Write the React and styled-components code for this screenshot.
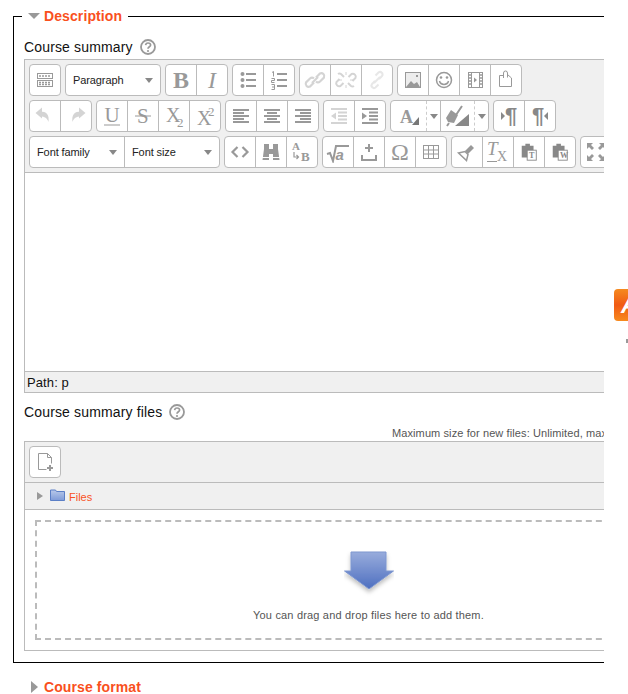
import React from 'react';
import styled, { createGlobalStyle } from 'styled-components';

const Global = createGlobalStyle`
  html, body { margin: 0; padding: 0; background: #fff; }
  body { font-family: "Liberation Sans", Arial, sans-serif; color: #111; }
`;
const Page = styled.div`position: relative; width: 628px; height: 694px; overflow: hidden;`;
const Clip = styled.div`width: 604px; overflow: hidden; padding-top: 6px;`;
const Fieldset = styled.fieldset`
  margin: 0 0 0 13px; padding: 0 10px 11px 10px; width: 689px; box-sizing: content-box;
  border: 1px solid #000; min-inline-size: 0;
`;
const Legend = styled.legend`
  display: flex; align-items: center; gap: 4px; margin-left: -2px; padding: 0 6px; height: 20px;
`;
const Heading = styled.span`font-size: 14px; font-weight: bold; color: #f9501d; line-height: 20px; letter-spacing: 0.1px;`;
const ArrowDown = styled.span`width: 0; height: 0; border-left: 6px solid transparent; border-right: 6px solid transparent; border-top: 6px solid #999;`;
const ArrowRight = styled.span`
  flex: none; width: 0; height: 0; border-left: ${p => p.$w}px solid #999;
  border-top: ${p => p.$s}px solid transparent; border-bottom: ${p => p.$s}px solid transparent;
`;
const Label = styled.div`display: flex; align-items: center; gap: 7px; height: 20px; font-size: 14px; letter-spacing: 0.15px;`;
const SummaryLabel = styled(Label)`margin: 11px 0 2px;`;
const FilesLabel = styled(Label)`margin-top: 9px;`;
const Editor = styled.div`border: 1px solid #bbb; background: #f0f0f0;`;
const Toolbar = styled.div`display: flex; flex-direction: column; gap: 4px; padding: 4px; border-bottom: 1px solid #bbb;`;
const Row = styled.div`display: flex; gap: 4px; height: 32px;`;
const Group = styled.div`display: flex; flex: none; border: 1px solid #bbb; border-radius: 4px; background: #fff; overflow: hidden;`;
const Btn = styled.div`
  flex: none; width: 30px; height: 30px; display: flex; align-items: center; justify-content: center;
  color: ${p => (p.$off ? '#d4d4d4' : '#999')};
  & + & { border-left: 1px solid #bbb; }
  svg { display: block; }
`;
const Letter = styled.span`
  font-family: "Liberation Serif", serif; font-size: 24px; line-height: 1; color: #999;
  font-weight: ${p => (p.$bold ? 'bold' : 'normal')}; font-style: ${p => (p.$italic ? 'italic' : 'normal')};
`;
const Pilcrow = styled.span`font-size: 22px; font-weight: bold; line-height: 1; color: #888;`;
const Pointer = styled.span`
  flex: none; width: 0; height: 0; border-top: 4px solid transparent; border-bottom: 4px solid transparent;
  ${p => (p.$left ? 'border-right: 4px solid #888;' : 'border-left: 4px solid #888;')}
`;
const Split = styled.div`
  flex: none; height: 30px; width: ${p => p.$w}px; display: flex; align-items: center; justify-content: center;
  & + & { border-left: 1px solid #bbb; }
`;
const SplitIcon = styled.div`flex: 1; height: 30px; display: flex; align-items: center; justify-content: center; border-right: 1px dashed #ccc;`;
const SplitArrow = styled.div`flex: none; width: 13px; display: flex; justify-content: center;`;
const Select = styled.div`
  flex: none; width: ${p => p.$w}px; height: 30px; box-sizing: border-box; padding: 0 7px; display: flex; align-items: center; justify-content: space-between;
  font-size: 11px; color: #222; letter-spacing: -0.1px;
  & + & { border-left: 1px solid #bbb; }
`;
const Caret = styled.span`flex: none; width: 0; height: 0; border-left: 4px solid transparent; border-right: 4px solid transparent; border-top: 5px solid #888;`;
const Content = styled.div`height: 198px; background: #fff;`;
const Status = styled.div`height: 20px; line-height: 21px; padding-left: 2px; font-size: 13px; letter-spacing: 0.1px; border-top: 1px solid #bbb;`;
const Limits = styled.div`margin-top: 1px; padding-left: 368px; height: 18px; line-height: 20px; font-size: 11px; letter-spacing: 0.1px; color: #555; white-space: nowrap;`;
const Manager = styled.div`border: 1px solid #bbb; background: #fff;`;
const ManagerBar = styled.div`display: flex; height: 32px; padding: 4px; background: #f0f0f0; border-bottom: 1px solid #bbb;`;
const Crumbs = styled.div`display: flex; align-items: center; height: 26px; padding-left: 12px; background: #f0f0f0; border-bottom: 1px solid #bbb;`;
const FolderSlot = styled.span`display: flex; margin: 0 4px 2px 7px;`;
const Crumb = styled.span`font-size: 11px; color: #f9501d; position: relative; top: 1px;`;
const DropArea = styled.div`padding: 10px;`;
const Drop = styled.div`
  height: 120px; box-sizing: border-box; border: 2px dashed #bbb; display: flex; flex-direction: column; align-items: center;
  font-size: 11px; letter-spacing: 0.18px; color: #555; padding-top: 29px; gap: 12px;
`;
const Collapsed = styled.div`display: flex; align-items: center; gap: 6px; margin: 14px 0 0 31px;`;
const Badge = styled.div`
  position: absolute; left: 614px; top: 289px; width: 14px; height: 32px; box-sizing: border-box; overflow: hidden;
  border-radius: 4px 0 0 4px; background: linear-gradient(#f58a1f, #f15a14 50%, #f78a1e);
  color: #fff; font-size: 24px; font-weight: bold; font-style: italic; line-height: 32px; padding-left: 7px;
`;
const Tick = styled.div`position: absolute; left: 626px; top: 339px; width: 2px; height: 4px; background: #999;`;

const I = ({ children }) => <svg width="30" height="30" viewBox="0 0 30 30" fill="none" stroke="currentColor" strokeWidth="2">{children}</svg>;
const lines = (arr) => arr.map(([x1, x2, y], i) => <path key={i} d={`M${x1} ${y}H${x2}`} />);
const serif = { fontFamily: 'Liberation Serif', fill: '#999', stroke: 'none' };

const Help = () => (
  <svg width="16" height="16" viewBox="0 0 16 16" fill="none" stroke="#999" strokeWidth="1.8">
    <circle cx="8" cy="8" r="7" />
    <path d="M5.600 6.200C5.800 4.600 7 4 8 4c1.500 0 2.600.9 2.600 2.100C10.600 7.800 8 7.800 8 9.800" strokeWidth="1.700" />
    <circle cx="8" cy="12" r="1.100" fill="#999" stroke="none" />
  </svg>
);
const Kitchen = () => <I><g strokeWidth="1"><rect x="7.500" y="8.500" width="15" height="5" /><rect x="7.500" y="15.500" width="15" height="6" /><path d="M9 11h12M9 17.500h12M9 19.500h12" strokeDasharray="2 1" strokeWidth="1.500" /></g></I>;
const Bullets = () => <I><circle cx="9.500" cy="9" r="2" fill="currentColor" stroke="none" /><circle cx="9.500" cy="15" r="2" fill="currentColor" stroke="none" /><circle cx="9.500" cy="21" r="2" fill="currentColor" stroke="none" />{lines([[13, 23, 9], [13, 23, 15], [13, 23, 21]])}</I>;
const Numbers = () => <I><g strokeWidth="1"><path d="M8 7.500l1.500-1v5M7.500 13.500h3v2h-3v2h3M7.500 19.500h3v5h-3M8 22h2" /></g>{lines([[13, 23, 9], [13, 23, 15], [13, 23, 21]])}</I>;
const Chain = () => <I><g strokeWidth="2.200"><path d="M14 17.500l-4 4a3 3 0 0 1-4-4l4-4a3 3 0 0 1 4 0" /><path d="M16 12.500l4-4a3 3 0 0 1 4 4l-4 4a3 3 0 0 1-4 0" /><path d="M12 18l6-6" /></g></I>;
const Unlink = () => <I><path d="M12.500 18l-3 3a3 3 0 0 1-4-4l3-3M17.500 12l3-3a3 3 0 0 1 4 4l-3 3M13 12l-3-3a2.800 2.800 0 0 0-3 0M17 18l3 3a2.800 2.800 0 0 0 3 0" /><path strokeWidth="1" d="M15 7v3M15 20v3M8 15h3M19 15h3" /></I>;
const Anchor = () => <I><g opacity=".55"><path d="M13 16l-3 3a2.500 2.500 0 0 0 3.500 3.500l3-3M17 14l3-3a2.500 2.500 0 0 0-3.500-3.500l-3 3M12 18l6-6" /></g></I>;
const Picture = () => <I><rect x="7.500" y="7.500" width="15" height="15" strokeWidth="1" /><rect x="8" y="8" width="14" height="14" fill="currentColor" opacity=".18" stroke="none" /><path d="M8 22l5-6 3 3 3-2 3 5z" fill="currentColor" stroke="none" /><rect x="18" y="10" width="2" height="2" fill="currentColor" stroke="none" /></I>;
const Smile = () => <I><circle cx="15" cy="15" r="7.500" strokeWidth="1.500" /><circle cx="12" cy="12.500" r="1.300" fill="currentColor" stroke="none" /><circle cx="18" cy="12.500" r="1.300" fill="currentColor" stroke="none" /><path d="M10.500 16c1 4.500 8 4.500 9 0" strokeWidth="1.500" /></I>;
const Film = () => <I><rect x="8.500" y="7.500" width="14" height="15" strokeWidth="1" /><path d="M11.500 8v14M19.500 8v14" strokeWidth="1" /><path d="M9 10h2M9 13h2M9 16h2M9 19h2M20 10h2M20 13h2M20 16h2M20 19h2" strokeWidth="1.500" /><path d="M14 12.500l3 2.500-3 2.500z" fill="currentColor" stroke="none" /></I>;
const Doc = () => <I><g strokeWidth="1"><path d="M8.500 10.500h3.500M16.500 9.500l4 3.500v8.500h-12v-11" /><path d="M12.500 13v-5a2 2 0 0 1 4 0v4.500" /></g></I>;
const Undo = () => <I><path d="M10 10.500c6.500 0 9.500 3 8.500 10.500-1.500-4-3.500-5.500-8.500-5.500z" fill="currentColor" stroke="none" /><path d="M12 6.500v11L5.500 12z" fill="currentColor" stroke="none" /></I>;
const Redo = () => <I><path d="M20 10.500c-6.500 0-9.500 3-8.500 10.500 1.500-4 3.500-5.500 8.500-5.500z" fill="currentColor" stroke="none" /><path d="M18 6.500v11l6.500-5.500z" fill="currentColor" stroke="none" /></I>;
const Underline = () => <I><text x="7.500" y="21" fontSize="21" {...serif}>U</text><path d="M7 24h16" strokeWidth="1" /></I>;
const Strike = () => <I><text x="9" y="22" fontSize="21" {...serif}>S</text><path d="M7 15h16" strokeWidth="1.200" /></I>;
const Sub = () => <I><text x="7" y="21" fontSize="20" {...serif}>X</text><text x="18" y="26" fontSize="13" {...serif}>2</text></I>;
const Sup = () => <I><text x="7" y="24" fontSize="20" {...serif}>X</text><text x="18" y="15" fontSize="13" {...serif}>2</text></I>;
const Align = ({ v }) => {
  const s = v === 'l' ? [7, 18] : v === 'c' ? [10, 20] : [12, 23];
  return <I>{lines([[7, 23, 9], [s[0], s[1], 12], [7, 23, 15], [s[0], s[1], 18], [7, 23, 21]])}</I>;
};
const Outdent = () => <I>{lines([[7, 23, 8], [14, 23, 11.500], [14, 23, 15], [14, 23, 18.500], [7, 23, 22]])}<path d="M12 11.500v7L7 15z" fill="currentColor" stroke="none" /></I>;
const Indent = () => <I>{lines([[7, 23, 8], [14, 23, 11.500], [14, 23, 15], [14, 23, 18.500], [7, 23, 22]])}<path d="M7 11.500v7l5-3.500z" fill="currentColor" stroke="none" /></I>;
const Fore = () => <svg width="22" height="22" viewBox="0 0 22 22"><text x="2" y="18" fontSize="18" fontWeight="bold" {...serif}>A</text><path d="M21 12v8h-7z" fill="#777" /></svg>;
const Back = () => <svg width="26" height="24" viewBox="0 0 26 24" fill="none" stroke="#999" strokeWidth="2"><path d="M1 14l5-8 7 5-4 8-6-1z" fill="#999" stroke="none" /><path d="M11 11l6-9M2 22l2-3" /><path d="M24 10v12H10z" fill="#888" stroke="none" /></svg>;
const Code = () => <I><path d="M12.500 10L7.500 15l5 5M17.500 10l5 5-5 5" strokeWidth="2.200" /></I>;
const Binoc = () => <I><path d="M8 7h5v5h4V7h5v5l1.500 11H17v-6h-4v6H6.500L8 12z" fill="currentColor" stroke="none" /><path d="M6 20.500h8M16 20.500h8" stroke="#fff" strokeWidth="1" /></I>;
const Replace = () => <svg width="24" height="24" viewBox="0 0 24 24"><text x="2" y="10" fontSize="11" fontWeight="bold" {...serif}>A</text><text x="11" y="21" fontSize="13" fontWeight="bold" {...serif}>B</text><path d="M4 12v5h4M6.500 15l2 2-2 2" fill="none" stroke="#999" strokeWidth="1.200" /></svg>;
const Sqrt = () => <svg width="24" height="22" viewBox="0 0 24 22" fill="none" stroke="#999" strokeWidth="2"><path d="M1 13l3-1 3 8 3-15h13" /><text x="9.500" y="19" fontFamily="Liberation Sans" fontWeight="bold" fontStyle="italic" fontSize="15" fill="#999" stroke="none">a</text></svg>;
const Upload = () => <I><path d="M8 18v5h14v-5" /><path d="M15 7v8M11 11h8" /></I>;
const Table = () => <I><rect x="7.500" y="8.500" width="15" height="13" strokeWidth="1" /><path d="M8 13h14M8 17h14M12.500 9v12M17.500 9v12" strokeWidth="1" /></I>;
const Brush = () => <I><path d="M13 14l6-6 3 3-6 6" fill="currentColor" stroke="none" /><path d="M13 14.500l3 3-1.500 6L6.500 16z" strokeWidth="1.500" /></I>;
const Clear = () => <svg width="26" height="24" viewBox="0 0 26 24"><text x="2" y="15" fontStyle="italic" fontSize="19" {...serif}>T</text><text x="12" y="21" fontSize="14" {...serif}>X</text><path d="M2 21.500h10" stroke="#999" /></svg>;
const Paste = ({ l }) => <svg width="20" height="20" viewBox="0 0 22 22"><path d="M3 4h4V2h5v2h4v13H3z" fill="#888" /><rect x="9" y="9" width="10" height="11" fill="#fff" stroke="#888" /><text x="11" y="18" fontFamily="Liberation Serif" fontWeight="bold" fontSize="9" fill="#888">{l}</text></svg>;
const Full = () => <I><path d="M6 6h6l-2 2 3 3-2 2-3-3-2 2zM24 6h-6l2 2-3 3 2 2 3-3 2 2zM6 24h6l-2-2 3-3-2-2-3 3-2-2zM24 24h-6l2-2-3-3 2-2 3 3 2-2z" fill="currentColor" stroke="none" /></I>;
const NewFile = () => <I><path d="M8.500 6.500h9l4 4v6M8.500 6.500v16h8M17.500 6.500v4h4" strokeWidth="1" /><path d="M20 18v6M17 21h6" /></I>;
const Folder = () => <svg width="15" height="12" viewBox="0 0 15 12"><defs><linearGradient id="fo" x1="0" x2="0" y1="0" y2="1"><stop offset="0" stopColor="#b9c9ea" /><stop offset="1" stopColor="#7e9bd8" /></linearGradient></defs><path d="M.5 11.500V1h5l1 1.500h8v9z" fill="url(#fo)" stroke="#5b7fc6" /></svg>;
const BigArrow = () => <svg width="50" height="46" viewBox="0 0 50 46"><defs><linearGradient id="ba" x1="0" x2="0" y1="0" y2="1"><stop offset="0" stopColor="#98acdc" /><stop offset="1" stopColor="#4e6fc0" /></linearGradient><filter id="sh" x="-20%" y="-20%" width="140%" height="150%"><feDropShadow dx="0" dy="3" stdDeviation="2" floodColor="#000" floodOpacity=".25" /></filter></defs><path d="M7 1h35v19h7.500L25 38 .5 20H7z" fill="url(#ba)" stroke="#7f97d0" strokeWidth="1" filter="url(#sh)" /></svg>;

export default function App() {
  return (
    <Page>
      <Global />
      <Clip>
        <Fieldset>
          <Legend><ArrowDown /><Heading>Description</Heading></Legend>
          <SummaryLabel>Course summary <Help /></SummaryLabel>
          <Editor>
            <Toolbar>
              <Row>
                <Group><Btn><Kitchen /></Btn></Group>
                <Group><Select $w={94}>Paragraph<Caret /></Select></Group>
                <Group><Btn><Letter $bold>B</Letter></Btn><Btn><Letter $italic>I</Letter></Btn></Group>
                <Group><Btn><Bullets /></Btn><Btn><Numbers /></Btn></Group>
                <Group><Btn $off><Chain /></Btn><Btn $off><Unlink /></Btn><Btn $off><Anchor /></Btn></Group>
                <Group><Btn><Picture /></Btn><Btn><Smile /></Btn><Btn><Film /></Btn><Btn><Doc /></Btn></Group>
              </Row>
              <Row>
                <Group><Btn $off><Undo /></Btn><Btn $off><Redo /></Btn></Group>
                <Group><Btn><Underline /></Btn><Btn><Strike /></Btn><Btn><Sub /></Btn><Btn><Sup /></Btn></Group>
                <Group><Btn><Align v="l" /></Btn><Btn><Align v="c" /></Btn><Btn><Align v="r" /></Btn></Group>
                <Group><Btn $off><Outdent /></Btn><Btn><Indent /></Btn></Group>
                <Group>
                  <Split $w={49}><SplitIcon><Fore /></SplitIcon><SplitArrow><Caret /></SplitArrow></Split>
                  <Split $w={47}><SplitIcon><Back /></SplitIcon><SplitArrow><Caret /></SplitArrow></Split>
                </Group>
                <Group><Btn><Pointer /><Pilcrow>¶</Pilcrow></Btn><Btn><Pilcrow>¶</Pilcrow><Pointer $left /></Btn></Group>
              </Row>
              <Row>
                <Group><Select $w={94}>Font family<Caret /></Select><Select $w={95}>Font size<Caret /></Select></Group>
                <Group><Btn><Code /></Btn><Btn><Binoc /></Btn><Btn><Replace /></Btn></Group>
                <Group><Btn><Sqrt /></Btn><Btn><Upload /></Btn><Btn><Letter>Ω</Letter></Btn><Btn><Table /></Btn></Group>
                <Group><Btn><Brush /></Btn><Btn><Clear /></Btn><Btn><Paste l="T" /></Btn><Btn><Paste l="W" /></Btn></Group>
                <Group><Btn><Full /></Btn></Group>
              </Row>
            </Toolbar>
            <Content />
            <Status>Path: p</Status>
          </Editor>
          <FilesLabel>Course summary files <Help /></FilesLabel>
          <Limits>Maximum size for new files: Unlimited, maximum attachments: 1</Limits>
          <Manager>
            <ManagerBar><Group><Btn><NewFile /></Btn></Group></ManagerBar>
            <Crumbs><ArrowRight $s={4} $w={6} /><FolderSlot><Folder /></FolderSlot><Crumb>Files</Crumb></Crumbs>
            <DropArea>
              <Drop><BigArrow />You can drag and drop files here to add them.</Drop>
            </DropArea>
          </Manager>
        </Fieldset>
        <Collapsed><ArrowRight $s={6} $w={7} /><Heading>Course format</Heading></Collapsed>
      </Clip>
      <Badge>A</Badge>
      <Tick />
    </Page>
  );
}
